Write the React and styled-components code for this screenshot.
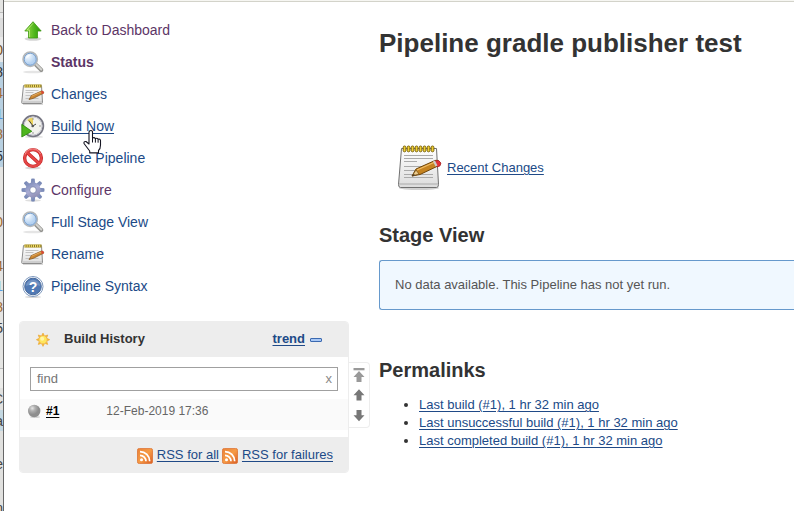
import React from "react";
import styled, { createGlobalStyle } from "styled-components";

const Global = createGlobalStyle`
  * { box-sizing: border-box; }
  body { margin: 0; background: #fff; overflow: hidden; color: #333;
    font: 13px/18px "Liberation Sans", Arial, sans-serif; }
`;
const Screen = styled.div`display: flex; width: 794px; height: 511px; overflow: hidden;`;
const Behind = styled.div`flex: none; width: 4px; height: 511px; border-right: 1px solid #666; overflow: hidden;`;
const Band = styled.div`
  display: flex; align-items: center; justify-content: flex-end; overflow: hidden;
  width: 3px; height: ${p => p.$h}px; background: ${p => p.$bg}; color: ${p => p.$c || "#444"};
  font-size: 14px; line-height: 14px; white-space: nowrap;
`;
const Page = styled.div`flex: 1; display: flex; flex-direction: column;`;
const TopEdge = styled.div`flex: none; height: 2px; background: #d3d3ca; border-top: 1px solid #f6f6f2;`;
const Columns = styled.div`flex: 1; display: flex; padding-top: 1px;`;
const Side = styled.aside`flex: none; width: 375px; padding: 11px 0 0 15px;`;
const Tasks = styled.nav`display: flex; flex-direction: column; height: 307px; padding-left: 2px;`;
const Task = styled.a`
  position: relative; display: flex; align-items: center; gap: 6px; height: 32px; font-size: 14px;
  color: ${p => (p.$visited ? "#5c3566" : "#204a87")}; font-weight: ${p => (p.$bold ? 700 : 400)};
  text-decoration: ${p => (p.$hover ? "underline" : "none")}; text-underline-offset: 2px;
  svg { flex: none; }
`;
const Pointer = styled.svg`position: absolute; left: 61px; top: 19px; z-index: 2;`;
const HistoryRow = styled.div`display: flex; align-items: flex-start;`;
const Panel = styled.section`width: 330px; height: 152px; border: 1px solid #ededed; border-radius: 4px; overflow: hidden;`;
const PanelHead = styled.header`
  display: flex; align-items: center; height: 35px; padding: 0 26px 1px 15px; background: #ededed; font-weight: 700;
`;
const Title = styled.span`flex: 1; padding-left: 13px;`;
const Link = styled.a`color: ${p => p.$c || "#204a87"}; text-decoration: underline; text-underline-offset: 2px;
  text-decoration-thickness: 1px; font-weight: ${p => (p.$bold ? 700 : 400)};`;
const BuildNo = styled(Link)`padding-left: 3px; font-size: 12px;`;
const Collapse = styled.span`width: 12px; height: 4px; margin: 1px 0 0 5px; border: 1px solid #3b69b0; border-radius: 1px; background: #a9c8f5;`;
const Find = styled.div`
  display: flex; align-items: center; justify-content: space-between; height: 24px; margin: 10px 10px 8px;
  padding: 0 5px 0 6px; border: 1px solid #a0a0a0; color: #757575;
`;
const Clear = styled.span`color: #8a8a8a;`;
const Build = styled.div`display: flex; height: 31px; padding: 3px 0 0 7px; background: #fafafa;`;
const When = styled.span`padding-left: 47px; font-size: 12px; color: #666;`;
const PanelFoot = styled.footer`
  display: flex; align-items: center; justify-content: flex-end; height: 36px; margin-top: 7px;
  padding-right: 15px; background: #ededed;
  svg { margin: 2px 4px 0 3px; }
`;
const Pager = styled.div`display: flex; flex-direction: column; align-items: center; width: 21px; height: 66px; margin-top: 41px;
  border: 1px solid #ededed; border-left: 0; border-radius: 0 4px 4px 0;`;
const Main = styled.main`flex: 1; min-width: 0; padding-top: 22px;`;
const H1 = styled.h1`margin: 0; font-size: 26px; line-height: 36px;`;
const Recent = styled.div`display: flex; align-items: center; gap: 3px; height: 48px; margin: 82px 0 0 17px;
  a { padding-top: 2px; }`;
const H2 = styled.h2`margin: ${p => p.$top}px 0 0; font-size: 20px; line-height: 26px;`;
const Message = styled.div`
  height: 50px; margin-top: 12px; padding: 15px; border: 1px solid #6699cc; border-right: 0;
  border-radius: 3px 0 0 3px; background: #f0f8ff; color: #555;
`;
const Links = styled.ul`margin: 13px 0 0; padding-left: 40px; line-height: 18px;`;

const Notepad = ({ size = 24, id }) => (
  <svg width={size} height={size} viewBox="0 0 48 48">
    <defs><linearGradient id={id} x2="0" y2="1"><stop stopColor="#fff" /><stop offset="1" stopColor="#dcdcdc" /></linearGradient></defs>
    <ellipse cx="23" cy="45" rx="20" ry="2" fill="#000" opacity=".18" />
    <path d="M5.5 5.5h35l2 36q0 3-2 3h-36q-2 0-2-3z" fill={`url(#${id})`} stroke="#707070" />
    <path d="M3 41h39" stroke="#aaa" />
    <path d="M8 12.5h29M8 15.5h29M8 18.5h13M8 23.5h29M8 27.5h25M8 31.5h29M8 34.5h29" stroke="#aaa" />
    {[0, 1, 2, 3, 4, 5, 6, 7].map(i => (
      <rect key={i} x={7.2 + i * 4} y="3" width="2.7" height="5.8" rx="1.3" fill="#f0d030" stroke="#7b6310" />
    ))}
    <path d="M16 33l4-7L39 17.5q4-1 5 2.5v2L24 31.5z" fill="#c58320" stroke="#6e4509" strokeLinejoin="round" />
    <path d="M21 27l18-8" stroke="#f2bd64" strokeWidth="1.3" />
    <path d="M16 33l4-6 3 4z" fill="#eccb8c" stroke="#704b14" strokeWidth=".7" />
    <path d="M39 18q4-2 6 2l-1 3-3 1z" fill="#e33137" stroke="#9c1c20" strokeWidth=".6" />
    <path d="M37 18.4l2-.8 2.5 5-2 1z" fill="#ccc" />
    <path d="M15.8 33.2l2-2.2 1 1z" fill="#222" />
  </svg>
);
const SmallNotepad = ({ id }) => (
  <svg width="24" height="24" viewBox="0 0 24 24">
    <defs><linearGradient id={id} x2="0" y2="1"><stop stopColor="#fff" /><stop offset="1" stopColor="#dedede" /></linearGradient></defs>
    <path d="M2 22.5h20" stroke="#000" opacity=".15" />
    <path d="M2.5 3.5h18l1 17q0 1-1 1h-19q-.8 0-.8-1z" fill={`url(#${id})`} stroke="#8c8c8c" />
    <path d="M2 20h19" stroke="#bbb" />
    <path d="M4.5 8.5h13M4.5 10.5h8M4.5 13.5h8M4.5 16.5h13" stroke="#b8b8b8" strokeWidth=".8" />
    <path d="M3.5 4h17" stroke="#8b7720" strokeWidth="3" />
    <path d="M3.5 4h17" stroke="#f0db68" strokeWidth="3" strokeDasharray="1.1 1" />
    <path d="M8 17.6l2.4-4L20.5 9q2 0 2.4 2L12.5 16.3z" fill="#cb8632" stroke="#7d4d16" strokeWidth=".7" />
    <path d="M10.5 14.2L20 10" stroke="#f1bd77" strokeWidth=".7" />
    <path d="M20 9.2q2.5-1.2 3 1.8l-2 1.2z" fill="#da4938" />
  </svg>
);
const Up = () => (
  <svg width="24" height="24" viewBox="0 0 24 24"><defs><linearGradient id="up"><stop stopColor="#a0de4b" /><stop offset=".6" stopColor="#4eb51c" /><stop offset="1" stopColor="#2b970b" /></linearGradient></defs>
    <ellipse cx="12" cy="20.8" rx="8.5" ry="2" fill="#000" opacity=".17" />
    <path d="M12 3.7L20.2 13h-3.7v7h-9v-7H3.8z" fill="url(#up)" stroke="#3d9812" strokeWidth=".8" strokeLinejoin="round" />
    <path d="M12 5.3L6.1 12h2.4v7" fill="none" stroke="#c8ef8e" strokeWidth=".7" />
  </svg>
);
const Search = ({ id }) => (
  <svg width="24" height="24" viewBox="0 0 24 24"><defs><radialGradient id={id} cx=".35" cy=".3"><stop stopColor="#f6fbff" /><stop offset="1" stopColor="#b5d2f1" /></radialGradient></defs>
    <ellipse cx="12" cy="22" rx="10" ry="1.3" fill="#000" opacity=".1" />
    <path d="M15 14.8l5.3 5.2" stroke="#93938f" strokeWidth="4" strokeLinecap="round" />
    <path d="M15 14.3l5.3 5.2" stroke="#d3d3d0" strokeWidth="2" strokeLinecap="round" />
    <circle cx="9.2" cy="9.2" r="7.2" fill={`url(#${id})`} stroke="#b5b7b8" strokeWidth="1.5" />
    <circle cx="9.2" cy="9.2" r="6" fill="none" stroke="#789fcd" />
    <path d="M5 9q0-5 6-4.5Q7 6 5 9" fill="#fff" opacity=".7" />
  </svg>
);
const Clock = () => (
  <svg width="24" height="24" viewBox="0 0 24 24">
    <ellipse cx="13" cy="22.9" rx="9" ry="1" opacity=".15" />
    <circle cx="12" cy="12" r="10.3" fill="#f2f2ed" stroke="#777783" strokeWidth="1.8" />
    <circle cx="12" cy="12" r="9" fill="none" stroke="#c9c9d2" />
    <path d="M12 12L6.2 6Q8.5 3.6 12 3.8z" fill="#ecd25b" />
    <path d="M12 12L8 6.5M11 12.5l4-2.5" stroke="#444" />
    <circle cx="11.7" cy="12" r="1.3" fill="#555" />
    <path d="M12 4v2M20 12h-2M12 20v-2" stroke="#999" />
    <path d="M.8 10.3L10.8 17.3.8 23z" fill="#4eb51e" stroke="#298608" strokeLinejoin="round" strokeWidth=".8" />
  </svg>
);
const Stop = () => (
  <svg width="24" height="24" viewBox="0 0 24 24"><ellipse cx="12" cy="22" rx="8" ry="1.3" opacity=".15" />
    <circle cx="12" cy="12" r="8.4" fill="#fff" stroke="#c32222" strokeWidth="3.3" />
    <path d="M6.1 6.5l12 11" stroke="#c92222" strokeWidth="3.5" />
    <circle cx="12" cy="12" r="8.4" fill="none" stroke="#e44747" strokeWidth="2.1" />
    <path d="M6.1 6.5l12 11" stroke="#e44747" strokeWidth="2.3" />
    <path d="M4 8.5a8.3 8.3 0 0 1 15.5-.5" stroke="#f4a1a1" fill="none" strokeWidth=".8" />
  </svg>
);
const Gear = () => (
  <svg width="24" height="24" viewBox="0 0 24 24"><defs><linearGradient id="gear" gradientUnits="userSpaceOnUse" x1="5" y1="1" x2="17" y2="23"><stop stopColor="#647aa9" /><stop offset=".5" stopColor="#a9acd4" /><stop offset="1" stopColor="#8380a2" /></linearGradient></defs>
    <ellipse cx="12" cy="22.5" rx="8" ry="1.2" opacity=".13" />
    <g fill="url(#gear)">
      {[0, 45, 90, 135, 180, 225, 270, 315].map(a => <path key={a} transform={`rotate(${a} 12 12)`} d="M9.7 6l.6-5.2q1.7-.7 3.4 0l.6 5.2z" />)}
      <circle cx="12" cy="12" r="7.6" />
    </g>
    <circle cx="12" cy="12" r="3.3" fill="#fff" stroke="#747ea7" strokeWidth=".8" />
  </svg>
);
const QMark = styled.text`font: 700 14px "Liberation Sans", Arial, sans-serif; fill: #fff;`;
const Help = () => (
  <svg width="24" height="24" viewBox="0 0 24 24"><ellipse cx="12" cy="23" rx="8" ry="1" opacity=".15" />
    <circle cx="12" cy="12.5" r="10" fill="#fff" stroke="#7d98be" />
    <circle cx="12" cy="12.5" r="8.3" fill="#5079b4" stroke="#46699c" />
    <path d="M4.7 12A7.4 7.4 0 0 1 19.3 12Q12 9 4.7 12" fill="#92acd0" opacity=".5" />
    <QMark x="12" y="17.5" textAnchor="middle">?</QMark>
  </svg>
);
const Sun = () => (
  <svg width="16" height="16" viewBox="0 0 16 16">
    <g fill="#f7c52b" stroke="#e99a25" strokeWidth=".5">
      {[0, 45, 90, 135, 180, 225, 270, 315].map(a => <path key={a} transform={`rotate(${a} 8 8.7)`} d="M6.9 4.2L8 2l1.1 2.2z" />)}
      <circle cx="8" cy="8.7" r="4.3" fill="#ffe65c" stroke="#f0b04a" strokeWidth="1" />
    </g><circle cx="7.2" cy="7.8" r="2" fill="#fff5a8" />
  </svg>
);
const Ball = () => (
  <svg width="16" height="16" viewBox="0 0 16 16"><defs><radialGradient id="ball" cx=".35" cy=".28"><stop stopColor="#e6e6e6" /><stop offset=".45" stopColor="#b0b0b0" /><stop offset="1" stopColor="#8e8e8e" /></radialGradient></defs>
    <ellipse cx="8" cy="15" rx="5" ry="1" opacity=".15" /><circle cx="7.2" cy="9" r="6.2" fill="url(#ball)" />
  </svg>
);
const Rss = ({ id }) => (
  <svg width="16" height="16" viewBox="0 0 16 16"><defs><linearGradient id={id} x2="1" y2="1"><stop stopColor="#e98238" /><stop offset=".5" stopColor="#f69b45" /><stop offset="1" stopColor="#d95c24" /></linearGradient></defs>
    <rect x=".4" y=".4" width="15.2" height="15.2" rx="2" fill={`url(#${id})`} stroke="#dd702f" strokeWidth=".8" />
    <circle cx="4.5" cy="11.8" r="1.5" fill="#fff" />
    <path d="M3 7.3a6 6 0 0 1 6 6M3 3.6a9.7 9.7 0 0 1 9.7 9.7" stroke="#fff" strokeWidth="1.7" fill="none" />
  </svg>
);
const Arrows = () => (
  <svg width="20" height="64" viewBox="0 0 20 64">
    <g fill="#999"><path d="M4.5 5h11v2.3h-11z" /><path d="M10 8l5.5 6h-3v5h-5v-5h-3z" /></g>
    <g fill="#777"><path d="M10 26.3l5.5 6h-3v5.2h-5v-5.2h-3z" /><path d="M10 58.3l5.5-6h-3v-5.2h-5v5.2h-3z" /></g>
  </svg>
);
const Hand = () => (
  <Pointer width="21" height="26" viewBox="0 0 21 26">
    <path d="M7.5 2q1.8-1.1 3 .5V9q1.7-1 3 .6 1.6-1 2.7.6 2-.5 2.3 1.4V16q0 4-2 5.5v2.4H7.7V22L2 14.5q-.5-2.3 2-2l3 2.5V3z" fill="#fff" stroke="#151522" strokeWidth="1.1" strokeLinejoin="round" />
    <path d="M10.5 9v4.5M13.4 9.6v4M16.1 10.3v3.4" stroke="#151522" />
  </Pointer>
);

const tasks = [
  { t: "Back to Dashboard", icon: <Up />, visited: true },
  { t: "Status", icon: <Search id="s1" />, visited: true, bold: true },
  { t: "Changes", icon: <SmallNotepad id="n1" /> },
  { t: "Build Now", icon: <Clock />, hover: true },
  { t: "Delete Pipeline", icon: <Stop /> },
  { t: "Configure", icon: <Gear />, visited: true },
  { t: "Full Stage View", icon: <Search id="s2" /> },
  { t: "Rename", icon: <SmallNotepad id="n2" /> },
  { t: "Pipeline Syntax", icon: <Help /> },
];
const bands = [
  [12, "#e4e4e2"], [1, "#bbb"], [5, "#e9e9e9"], [19, "#ddd"], [5, "#e9e9e9"], [16, "#e9e9e9", "0", "#76501f"], [4, "#e9e9e9"],
  [20, "#b8d0e1", "8", "#333"], [22, "#b8d0e1", "4", "#a66c35"], [20, "#b8d0e1", "1", "#4f8fde"], [20, "#b8d0e1", "8", "#a66c35"],
  [23, "#b8d0e1", "5", "#333"], [23, "#e5e5e3"], [20, "#d7d7d5"], [24, "#e5e5e3", "0", "#a06830"], [22, "#e5e5e3"],
  [20, "#e5e5e3", "4", "#a06830"], [20, "#e5e5e3", "1", "#579be5"], [22, "#e5e5e3", "8", "#a06830"], [20, "#e5e5e3", "5", "#444"],
  [30, "#e5e5e3"], [1, "#bbb"], [19, "#ececea"], [22, "#e1e1df", "C"], [21, "#c4d8e2", "a"], [22, "#e1e1df"], [22, "#e1e1df", "e"],
  [20, "#e1e1df"], [26, "#e1e1df", "n"],
];
const permalinks = ["Last build (#1), 1 hr 32 min ago", "Last unsuccessful build (#1), 1 hr 32 min ago", "Last completed build (#1), 1 hr 32 min ago"];

export default function App() {
  return (
    <Screen>
      <Global />
      <Behind>{bands.map(([h, bg, t, c], i) => <Band key={i} $h={h} $bg={bg} $c={c}>{t}</Band>)}</Behind>
      <Page>
        <TopEdge />
        <Columns>
          <Side>
            <Tasks>
              {tasks.map(k => (
                <Task key={k.t} $visited={k.visited} $bold={k.bold} $hover={k.hover}>{k.icon}{k.t}{k.hover && <Hand />}</Task>
              ))}
            </Tasks>
            <HistoryRow>
              <Panel>
                <PanelHead><Sun /><Title>Build History</Title><Link $bold>trend</Link><Collapse /></PanelHead>
                <Find><span>find</span><Clear>x</Clear></Find>
                <Build><Ball /><BuildNo $bold $c="#000">#1</BuildNo><When>12-Feb-2019 17:36</When></Build>
                <PanelFoot><Rss id="r1" /><Link>RSS for all</Link><Rss id="r2" /><Link>RSS for failures</Link></PanelFoot>
              </Panel>
              <Pager><Arrows /></Pager>
            </HistoryRow>
          </Side>
          <Main>
            <H1>Pipeline gradle publisher test</H1>
            <Recent><Notepad size={48} id="n3" /><Link>Recent Changes</Link></Recent>
            <H2 $top={31}>Stage View</H2>
            <Message>No data available. This Pipeline has not yet run.</Message>
            <H2 $top={47}>Permalinks</H2>
            <Links>{permalinks.map(t => <li key={t}><Link>{t}</Link></li>)}</Links>
          </Main>
        </Columns>
      </Page>
    </Screen>
  );
}
